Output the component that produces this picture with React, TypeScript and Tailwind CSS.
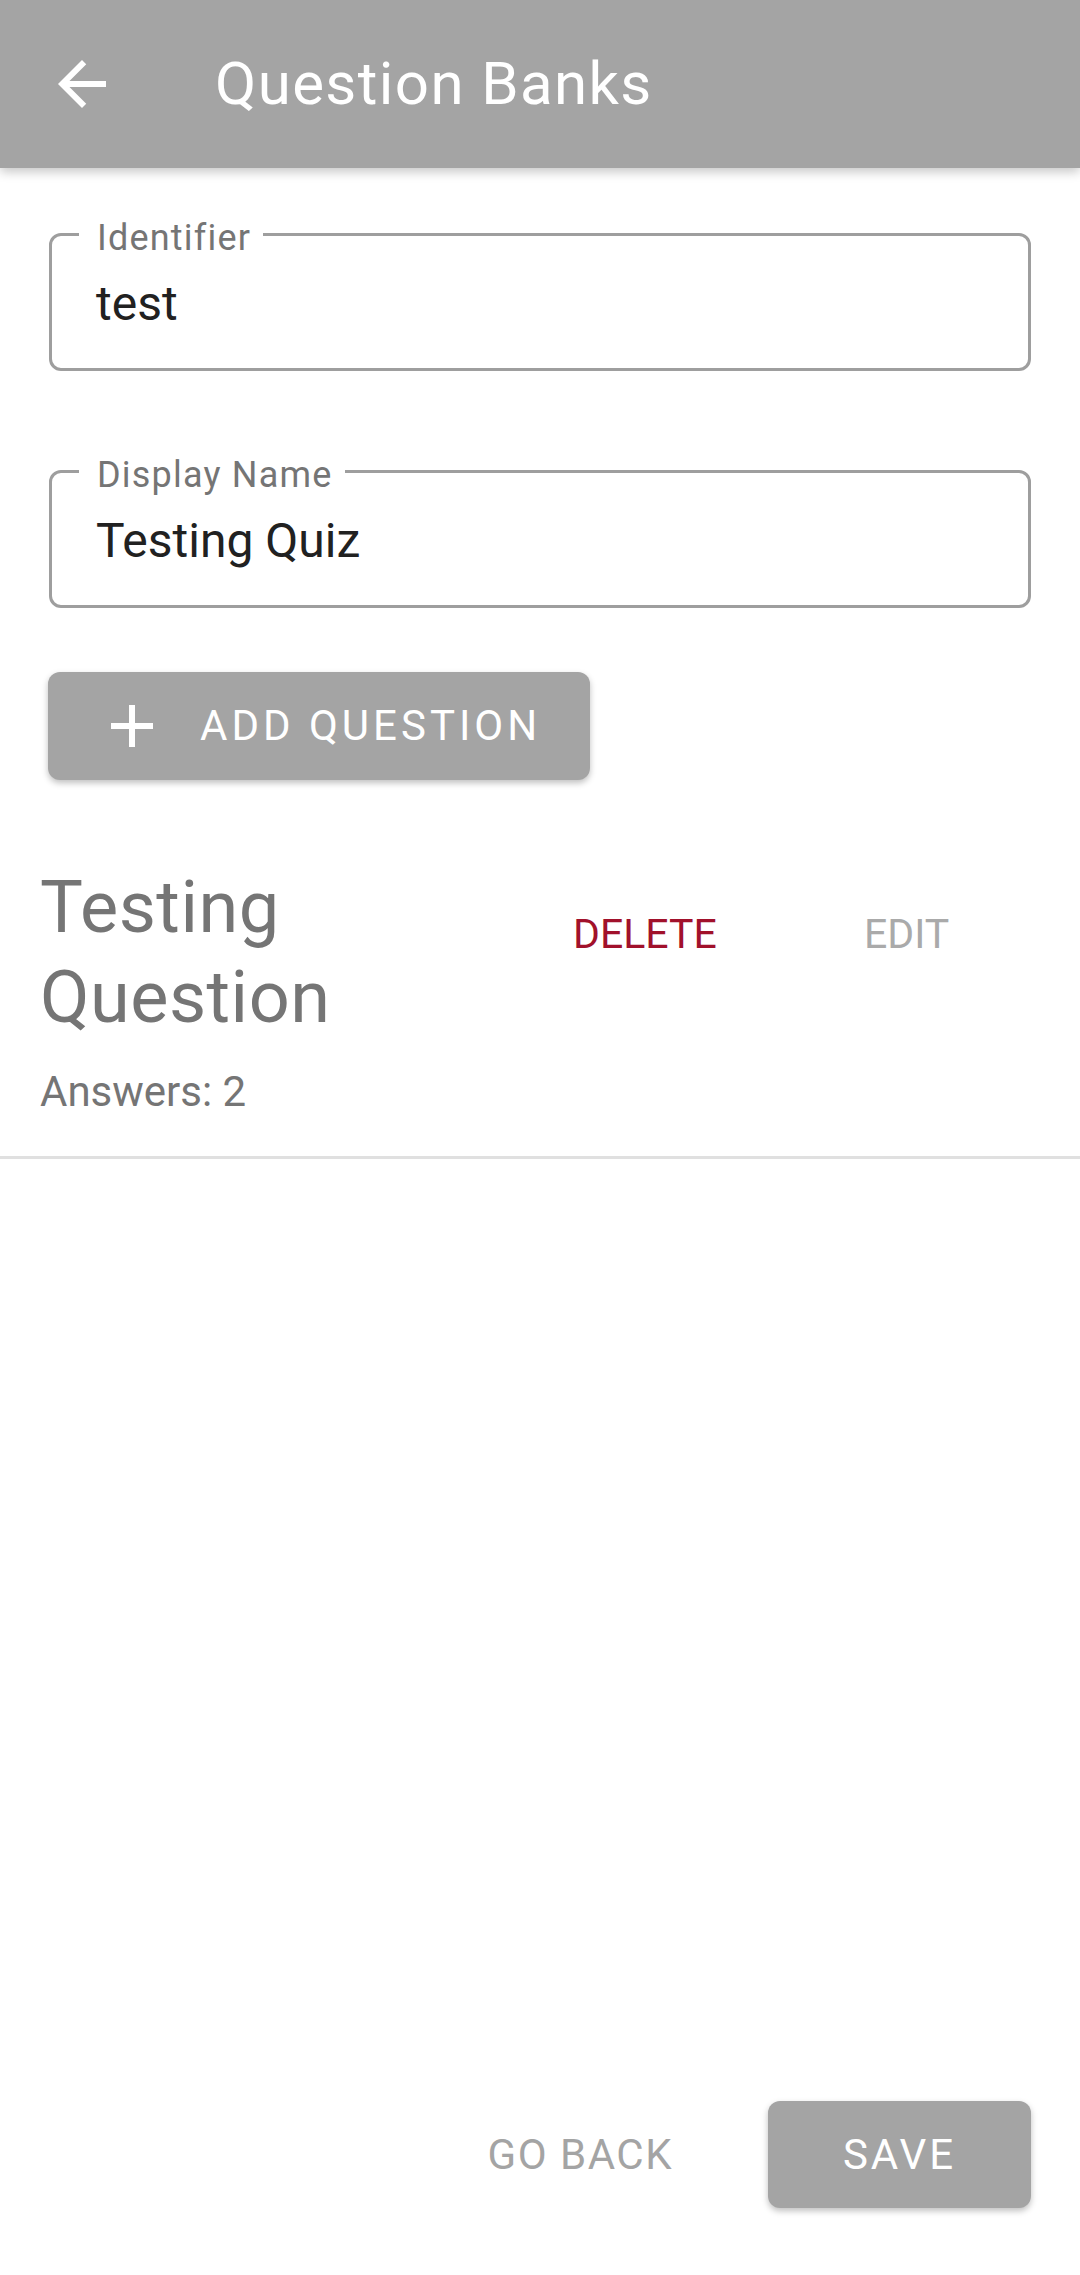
import React from "react";

const FONT = { fontFamily: "Roboto, 'Noto Sans', 'Liberation Sans', sans-serif" };

function BackArrow() {
  return (
    <svg width="72" height="72" viewBox="0 0 24 24" fill="#ffffff">
      <path d="M20 11H7.83l5.59-5.59L12 4l-8 8 8 8 1.41-1.41L7.83 13H20v-2z" />
    </svg>
  );
}

function PlusIcon() {
  return (
    <svg width="72" height="72" viewBox="0 0 24 24" fill="#ffffff">
      <path d="M19 13h-6v6h-2v-6H5v-2h6V5h2v6h6v2z" />
    </svg>
  );
}

interface FieldProps {
  label: string;
  value: string;
  className?: string;
}

function OutlinedField({ label, value, className }: FieldProps) {
  return (
    <fieldset className={`mx-[49px] rounded-[12px] border-[3px] border-[#9e9e9e] ${className ?? ""}`}>
      <legend className="ml-[27px] pl-[18px] pr-[12px] text-[36px] leading-[36px] tracking-[1.2px] text-[#757575]">
        <span className="relative top-[4px]">{label}</span>
      </legend>
      <div className="pl-[44px] pt-[28px] pb-[40px] text-[48px] leading-[48px] text-[#212121]">{value}</div>
    </fieldset>
  );
}

export default function App() {
  return (
    <div className="flex h-[2275px] w-[1080px] flex-col bg-white" style={FONT}>
      <header className="relative z-10 flex h-[168px] shrink-0 items-center bg-[#a4a4a4] shadow-[0_4px_10px_rgba(0,0,0,0.22)]">
        <div className="ml-[46px]">
          <BackArrow />
        </div>
        <div className="ml-[97px] text-[60px] leading-[72px] tracking-[1.4px] text-white">Question Banks</div>
      </header>

      <OutlinedField label="Identifier" value="test" className="mt-[48px]" />
      <OutlinedField label="Display Name" value="Testing Quiz" className="mt-[82px]" />

      <div className="mt-[64px] ml-[48px] flex h-[108px] w-[542px] items-center rounded-[12px] bg-[#a4a4a4] shadow-[0_3px_6px_rgba(0,0,0,0.25)]">
        <div className="ml-[48px]">
          <PlusIcon />
        </div>
        <span className="ml-[32px] text-[42px] leading-[60px] tracking-[4px] text-white">ADD QUESTION</span>
      </div>

      <div className="mt-[83px] flex items-start px-[40px]">
        <div className="w-[500px] text-[72px] leading-[90px] tracking-[0.5px] text-[#757575]">Testing Question</div>
        <div className="ml-[33px] mt-[41px] flex">
          <span className="w-[291px] text-[41px] leading-[60px] text-[#a1112b]">DELETE</span>
          <span className="text-[41px] leading-[60px] text-[#aaaaaa]">EDIT</span>
        </div>
      </div>
      <div className="mt-[19px] px-[40px] text-[42px] leading-[60px] text-[#757575]">Answers: 2</div>
      <div className="mt-[34px] h-[3px] w-full bg-[#e0e0e0]" />

      <div className="flex-1" />

      <div className="flex items-center justify-end pb-[67px] pr-[49px]">
        <span className="mr-[95px] text-[42px] leading-[60px] tracking-[1.5px] text-[#a4a4a4]">GO BACK</span>
        <div className="flex h-[107px] w-[263px] items-center justify-center rounded-[12px] bg-[#a4a4a4] shadow-[0_3px_6px_rgba(0,0,0,0.25)]">
          <span className="text-[42px] leading-[60px] tracking-[3px] text-white">SAVE</span>
        </div>
      </div>
    </div>
  );
}
